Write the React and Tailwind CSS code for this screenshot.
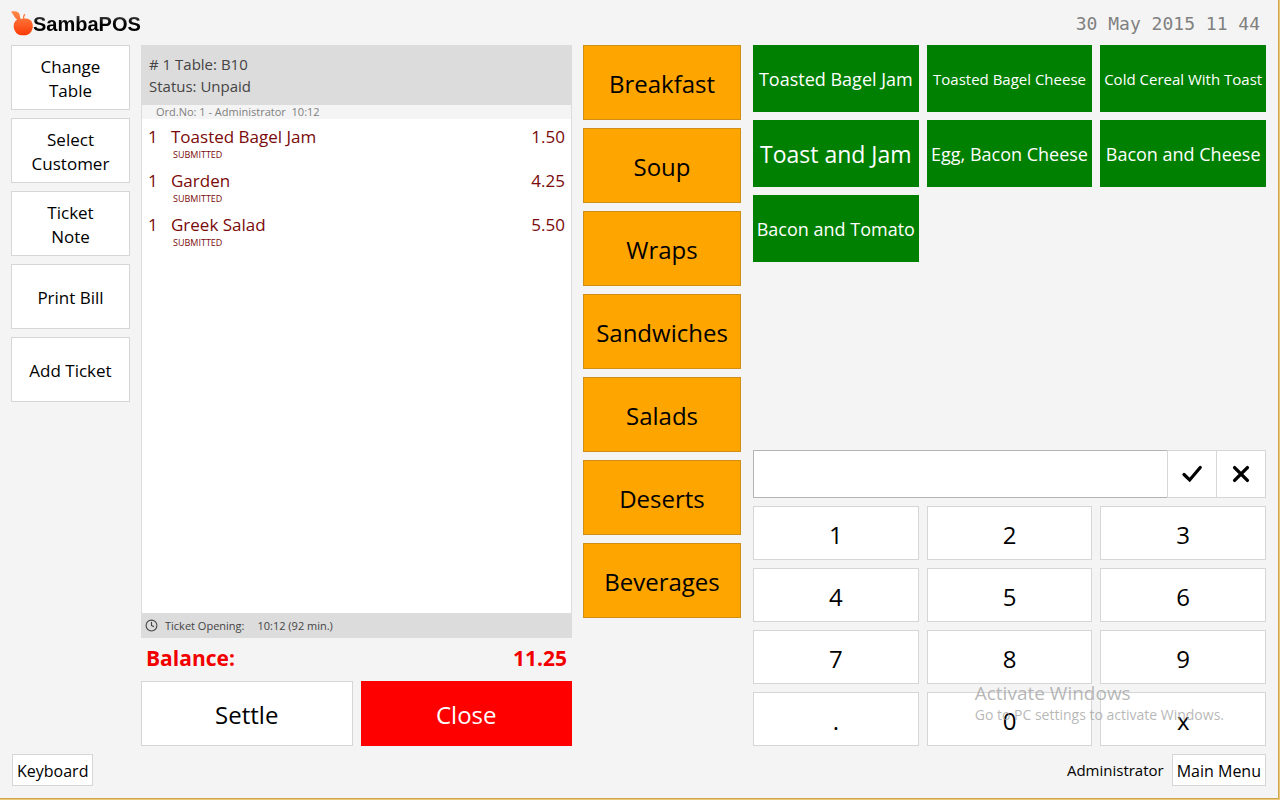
import { Clock } from "lucide-react";

const actions = ["Change Table", "Select Customer", "Ticket Note", "Print Bill", "Add Ticket"];

const orders = [
  { qty: 1, name: "Toasted Bagel Jam", price: "1.50" },
  { qty: 1, name: "Garden", price: "4.25" },
  { qty: 1, name: "Greek Salad", price: "5.50" },
];

const categories = ["Breakfast", "Soup", "Wraps", "Sandwiches", "Salads", "Deserts", "Beverages"];

const products = [
  { name: "Toasted Bagel Jam", size: "text-[18px]" },
  { name: "Toasted Bagel Cheese", size: "text-[15px]" },
  { name: "Cold Cereal With Toast", size: "text-[15px]" },
  { name: "Toast and Jam", size: "text-[23px]" },
  { name: "Egg, Bacon Cheese", size: "text-[18px]" },
  { name: "Bacon and Cheese", size: "text-[18px]" },
  { name: "Bacon and Tomato", size: "text-[18px]" },
];

const keys = ["1", "2", "3", "4", "5", "6", "7", "8", "9", ".", "0", "x"];

function Logo() {
  return (
    <div className="flex items-center pt-0.5">
      <svg viewBox="0 0 22 25" className="h-[25px] w-[22px]" aria-hidden="true">
        <defs>
          <linearGradient id="apple" x1="0" y1="0" x2="0" y2="1">
            <stop offset="0" stopColor="#ff8a4c" />
            <stop offset="1" stopColor="#fb3a05" />
          </linearGradient>
        </defs>
        <path
          fill="url(#apple)"
          d="M0 .8C2.500 0 5.500.2 7.600 1.800 9 3 8.700 5 9.300 7.400c1 .1 1.900.2 2.700.4-.2-2 .1-3.600 1.500-5l.9.900c-1 1.100-1.300 2.500-1.100 3.900 4.300-1 8.500 1.900 8.500 7.400 0 4.800-2.800 8.300-6 9-1.500.4-2.300.3-3.500.3s-2 .1-3.500-.4C5 23 2.700 19 2.700 15c0-3.300 1.500-5.500 3.600-6.800C3.600 7.500 3 4 0 .8Z"
        />
      </svg>
      <span className="bg-linear-to-b from-[#666] to-black to-60% bg-clip-text font-['Liberation_Sans',sans-serif] text-[20px] leading-6 font-bold text-transparent">
        SambaPOS
      </span>
    </div>
  );
}

export default function App() {
  return (
    <div className="relative flex min-h-screen flex-col border-r border-b border-[#ecc978] bg-[#f4f4f4] pr-[13px] pl-[11px] font-['Open_Sans','Noto_Sans',sans-serif] text-black shadow-[inset_-1px_-1px_0_#cda54a]">
      <header className="flex h-[45px] items-center justify-between">
        <Logo />
        <time className="pt-0.5 pr-1.5 font-['DejaVu_Sans_Mono',monospace] text-[18px] text-[#808080]">30 May 2015 11 44</time>
      </header>

      <main className="grid flex-1 grid-cols-[119fr_431fr_158fr_514fr] gap-x-[11px]">
        <nav className="flex flex-col gap-2">
          {actions.map((label) => (
            <button key={label} className="h-[65px] border border-[#d6d6d6] bg-white px-4 pt-0.5 text-[17px] leading-6">
              {label}
            </button>
          ))}
        </nav>

        <section className="flex flex-col">
          <div className="h-[60px] bg-[#dcdcdc] px-2 pt-2 text-[15px] leading-[22px] text-[#444]">
            <p># 1 Table: B10</p>
            <p>Status: Unpaid</p>
          </div>
          <div className="flex flex-1 flex-col border-x border-[#dcdcdc] bg-white">
            <p className="bg-[#f4f4f4] pl-[14px] text-[11px] leading-[14px] whitespace-pre text-[#808080]">
              {"Ord.No: 1 - Administrator  10:12"}
            </p>
            <table className="w-full text-[17px] text-[#7a0a0a]">
              <tbody>
                {orders.map((o) => (
                  <tr key={o.name} className="h-11 align-top">
                    <td className="w-[29px] pt-1.5 pl-1.5 leading-6">{o.qty}</td>
                    <td className="pt-1.5">
                      <p className="leading-6">{o.name}</p>
                      <p className="pl-0.5 text-[9px] leading-3">SUBMITTED</p>
                    </td>
                    <td className="pt-1.5 pr-1.5 text-right leading-6">{o.price}</td>
                  </tr>
                ))}
              </tbody>
            </table>
          </div>
          <div className="flex h-[25px] items-center bg-[#dcdcdc] pl-1 text-[11px] text-[#444]">
            <Clock size={13} className="mr-[7px]" />
            <span className="mr-[13px] pt-0.5">Ticket Opening:</span>
            <span className="pt-0.5">10:12 (92 min.)</span>
          </div>
          <div className="flex h-[43px] items-center justify-between px-[5px] pb-0.5 text-[21px] font-bold text-[#f20000]">
            <span>Balance:</span>
            <span>11.25</span>
          </div>
          <div className="grid h-[65px] grid-cols-2 gap-2 text-[24px]">
            <button className="border border-[#d6d6d6] bg-white pt-0.5">Settle</button>
            <button className="bg-[#ff0000] pt-0.5 text-white">Close</button>
          </div>
        </section>

        <nav className="flex flex-col gap-2">
          {categories.map((label) => (
            <button key={label} className="h-[75px] border border-[#cf8f17] bg-[#ffa500] pt-0.5 text-[24px]">
              {label}
            </button>
          ))}
        </nav>

        <section className="flex flex-col justify-between gap-2 pl-px">
          <div className="grid grid-cols-3 gap-2">
            {products.map((p) => (
              <button key={p.name} className={`h-[67px] bg-[#008000] pt-0.5 whitespace-nowrap text-white ${p.size}`}>
                {p.name}
              </button>
            ))}
          </div>
          <div className="flex flex-col gap-2">
            <div className="flex h-12">
              <input
                type="text"
                aria-label="Number"
                className="min-w-0 flex-1 border border-r-0 border-[#b4b4b4] bg-white px-3 text-[24px] outline-none"
              />
              <button aria-label="Confirm" className="flex w-[50px] items-center justify-center border border-[#d6d6d6] bg-white">
                <svg viewBox="0 0 20 18" className="h-[18px] w-5" fill="none" stroke="#000" strokeWidth="3.200" strokeLinecap="round" aria-hidden="true">
                  <path d="M2 9.500 7.700 15 18.200 2.400" />
                </svg>
              </button>
              <button aria-label="Clear" className="flex w-[49px] items-center justify-center border border-l-0 border-[#d6d6d6] bg-white">
                <svg viewBox="0 0 18 18" className="size-[18px]" fill="none" stroke="#000" strokeWidth="3.400" strokeLinecap="round" aria-hidden="true">
                  <path d="M2.600 2.600 15.400 15.400M15.400 2.600 2.600 15.400" />
                </svg>
              </button>
            </div>
            <div className="grid grid-cols-3 gap-2 text-[24px]">
              {keys.map((k) => (
                <button key={k} className="h-[54px] border border-[#d6d6d6] bg-white pt-1">
                  {k}
                </button>
              ))}
            </div>
          </div>
        </section>
      </main>

      <footer className="flex items-center justify-between pt-2 pb-[13px] pl-px text-[16px]">
        <button className="h-8 border border-[#d6d6d6] bg-white px-1 pt-0.5">Keyboard</button>
        <div className="flex items-center gap-2">
          <span className="text-[15px]">Administrator</span>
          <button className="h-8 border border-[#d6d6d6] bg-white px-1 pt-0.5">Main Menu</button>
        </div>
      </footer>

      <div className="pointer-events-none absolute right-[55px] bottom-[74px] text-[#a0a0a0]/75">
        <p className="text-[19px] leading-6">Activate Windows</p>
        <p className="text-[14px] leading-5">Go to PC settings to activate Windows.</p>
      </div>
    </div>
  );
}
